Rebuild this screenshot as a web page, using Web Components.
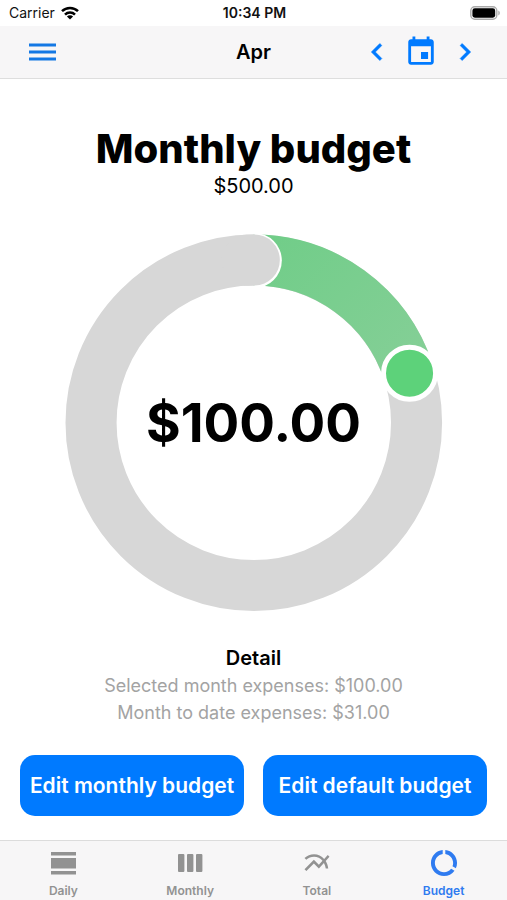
<!DOCTYPE html>
<html lang="en">
<head>
<meta charset="utf-8">
<meta name="viewport" content="width=device-width, initial-scale=1">
<title>Monthly budget</title>
<style>
  body { margin: 0; background: #fff; color: #000; font-family: Inter, "Liberation Sans", sans-serif; }
</style>
</head>
<body>
<budget-app></budget-app>

<template id="status-bar">
  <style>
    :host { display: grid; grid-template-columns: 1fr auto 1fr; align-items: center; height: 26px; padding: 0 7px 0 9px; font-size: 14px; line-height: 20px; color: #111; }
    .left { display: flex; align-items: center; gap: 6px; }
    .time { font-weight: 600; }
    .battery { justify-self: end; }
    svg { display: block; }
  </style>
  <span class="left"><slot name="carrier"></slot>
    <svg width="18" height="14" viewBox="0 0 18 14" fill="none" stroke="#000" stroke-width="2.5" aria-hidden="true">
      <path d="M1 5.2a11.4 11.4 0 0 1 16 0M4 8.6a7 7 0 0 1 10 0"/><path d="M9 13.6 5.9 10.6a4.4 4.4 0 0 1 6.2 0z" fill="#000" stroke="none"/>
    </svg>
  </span>
  <span class="time"><slot name="time"></slot></span>
  <svg class="battery" width="30" height="14" viewBox="0 0 30 14" aria-hidden="true">
    <rect x=".8" y=".8" width="26" height="12.4" rx="4" fill="#fff" stroke="#aaa" stroke-width="1.4"/>
    <rect x="2.4" y="2.3" width="22.8" height="9.4" rx="2.4"/><path d="M28.3 4.6c2 .8 2 4 0 4.8z" fill="#aaa"/>
  </svg>
</template>

<template id="nav-header">
  <style>
    :host { display: grid; grid-template-columns: 1fr auto 1fr; align-items: center; height: 52px; padding: 0 25px; background: #f7f6f7; border-bottom: 1px solid #dedede; }
    h2 { margin: 0; font-size: 20px; line-height: 26px; font-weight: 600; }
    button { display: block; border: 0; padding: 0; background: none; color: #007aff; cursor: pointer; }
    svg { display: block; fill: currentColor; }
    .actions { display: flex; justify-content: flex-end; gap: 10px; }
  </style>
  <button type="button" aria-label="Menu"><svg width="34" height="34" viewBox="0 0 34 34"><path d="M4 8.5h27v3H4zM4 15.5h27v3H4zM4 22.5h27v3H4z" fill="#1478e4"/></svg></button>
  <h2><slot></slot></h2>
  <div class="actions">
    <button type="button" aria-label="Previous month"><svg width="34" height="34" viewBox="0 0 24 24"><path d="M15.41 7.41 14 6l-6 6 6 6 1.41-1.41L10.83 12z" stroke="currentColor" stroke-width=".4"/></svg></button>
    <button type="button" aria-label="Choose month"><svg width="34" height="34" viewBox="0 0 24 24"><path d="M17 12h-5v5h5v-5zM16 1v2H8V1H6v2H5c-1.11 0-1.99.9-1.99 2L3 19c0 1.1.89 2 2 2h14c1.1 0 2-.9 2-2V5c0-1.1-.9-2-2-2h-1V1h-2zm3 18H5V8h14v11z"/></svg></button>
    <button type="button" aria-label="Next month"><svg width="34" height="34" viewBox="0 0 24 24"><path d="M10 6 8.59 7.41 13.17 12l-4.58 4.59L10 18l6-6z" stroke="currentColor" stroke-width=".4"/></svg></button>
  </div>
</template>

<template id="budget-ring">
  <style>
    :host { display: grid; place-items: center; width: 100%; margin: 0 auto; }
    svg, .value { grid-area: 1 / 1; }
    svg { display: block; width: 100%; height: auto; }
    .value { font-size: 53px; line-height: 64px; font-weight: 700; }
  </style>
  <svg viewBox="0 0 380 380" fill="none" aria-hidden="true">
    <defs><linearGradient id="g" gradientUnits="userSpaceOnUse" x1="200" y1="0" x2="340" y2="140"><stop offset="0" stop-color="#70cd88"/><stop offset="1" stop-color="#84cf96"/></linearGradient></defs>
    <circle cx="190.5" cy="189.5" r="162.5" stroke="#d7d7d7" stroke-width="51"/>
    <path d="M190.5 27A162.5 162.5 0 0 1 345 139.3" stroke="url(#g)" stroke-width="51"/>
    <path d="M191 0a27.5 27.5 0 0 1 0 55z" fill="#fff"/>
    <path d="M184 27.1L191 27" stroke="#d7d7d7" stroke-width="51" stroke-linecap="round"/>
    <circle cx="346" cy="140" r="26" fill="#5dd27a" stroke="#fff" stroke-width="5"/>
  </svg>
  <span class="value"><slot></slot></span>
</template>

<template id="action-button">
  <style>
    :host { display: block; flex: 1 1 0; min-width: 0; }
    button { display: block; width: 100%; height: 61px; border: 0; border-radius: 15px; padding: 0; background: #007aff; color: #fff; font: 600 21px/26px Inter, "Liberation Sans", sans-serif; white-space: nowrap; cursor: pointer; }
  </style>
  <button type="button"><slot></slot></button>
</template>

<template id="tab-item">
  <style>
    :host { display: block; flex: 1 1 0; color: #929292; }
    :host([active]) { color: #2f7bf0; }
    a { display: flex; flex-direction: column; align-items: center; gap: 4px; padding-top: 7px; color: inherit; text-decoration: none; font-size: 12px; line-height: 18px; font-weight: 600; }
    ::slotted(svg) { display: block; fill: currentColor; }
  </style>
  <a href="#"><slot name="icon"></slot><span><slot></slot></span></a>
</template>

<template id="tab-bar">
  <style>
    :host { display: block; background: #f7f6f7; border-top: 1px solid #dcdcdc; }
    nav { display: flex; height: 59px; }
  </style>
  <nav aria-label="Sections"><slot></slot></nav>
</template>

<template id="budget-app">
  <style>
    :host { display: flex; flex-direction: column; min-height: 100vh; }
    main { flex: 1; display: flex; flex-direction: column; text-align: center; padding: 46px 20px 24px; }
    h1 { margin: 0; font-size: 40px; line-height: 48px; font-weight: 800; }
    .limit { margin: 0 0 34px; font-size: 20px; line-height: 26px; }
    h2 { margin: 31px 0 0; font-size: 20px; line-height: 27px; font-weight: 600; }
    .detail { margin: 0; font-size: 18px; line-height: 27px; color: #a3a3a3; }
    .buttons { display: flex; gap: 19px; margin-top: auto; }
    budget-ring { width: 81.5%; }
  </style>
  <status-bar><span slot="carrier">Carrier</span><span slot="time">10:34 PM</span></status-bar>
  <nav-header>Apr</nav-header>
  <main>
    <h1>Monthly budget</h1>
    <p class="limit">$500.00</p>
    <budget-ring>$100.00</budget-ring>
    <h2>Detail</h2>
    <p class="detail">Selected month expenses: $100.00</p>
    <p class="detail">Month to date expenses: $31.00</p>
    <div class="buttons">
      <action-button>Edit monthly budget</action-button>
      <action-button>Edit default budget</action-button>
    </div>
  </main>
  <tab-bar>
    <tab-item><svg slot="icon" width="30" height="30" viewBox="0 0 30 30"><path d="M3 4h25v3.5H3zM3 10h25v10.5H3zM3 23h25v3.5H3z"/></svg>Daily</tab-item>
    <tab-item><svg slot="icon" width="30" height="30" viewBox="0 0 30 30"><rect x="3" y="6" width="6.4" height="18" rx="1"/><rect x="12" y="6" width="6.4" height="18" rx="1"/><rect x="21" y="6" width="6.4" height="18" rx="1"/></svg>Monthly</tab-item>
    <tab-item><svg slot="icon" width="30" height="30" viewBox="0 0 24 24"><path d="M22 6.92l-1.41-1.41-2.85 3.21C15.68 6.4 12.83 5 9.61 5 6.72 5 4.07 6.16 2 8l1.42 1.42C5.12 7.93 7.27 7 9.61 7c2.74 0 5.09 1.26 6.77 3.24l-2.88 3.24-4-4L2 16.99l1.5 1.5 6-6.01 4 4 4.05-4.55c.75 1.35 1.25 2.9 1.44 4.55H21c-.22-2.3-.95-4.39-2.04-6.14L22 6.92z"/></svg>Total</tab-item>
    <tab-item active><svg slot="icon" width="30" height="30" viewBox="0.5 0.5 23 23"><path d="M13 2.05v3.03c3.39.49 6 3.39 6 6.92 0 .9-.18 1.75-.48 2.54l2.6 1.53c.56-1.24.88-2.62.88-4.07 0-5.18-3.95-9.45-9-9.95zM12 19c-3.87 0-7-3.13-7-7 0-3.53 2.61-6.43 6-6.92V2.05c-5.06.5-9 4.76-9 9.95 0 5.52 4.47 10 9.99 10 3.31 0 6.24-1.61 8.06-4.09l-2.6-1.53C16.17 17.98 14.21 19 12 19z"/></svg>Budget</tab-item>
  </tab-bar>
</template>

<script>
  class TemplateElement extends HTMLElement {
    constructor() {
      super();
      const template = document.getElementById(this.localName);
      this.attachShadow({ mode: "open" }).append(document.importNode(template.content, true));
    }
  }
  class StatusBar extends TemplateElement {}
  class NavHeader extends TemplateElement {}
  class BudgetRing extends TemplateElement {}
  class ActionButton extends TemplateElement {}
  class TabItem extends TemplateElement {
    connectedCallback() {
      if (this.hasAttribute("active")) this.shadowRoot.querySelector("a").setAttribute("aria-current", "page");
    }
  }
  class TabBar extends TemplateElement {}
  class BudgetApp extends TemplateElement {}
  customElements.define("status-bar", StatusBar);
  customElements.define("nav-header", NavHeader);
  customElements.define("budget-ring", BudgetRing);
  customElements.define("action-button", ActionButton);
  customElements.define("tab-item", TabItem);
  customElements.define("tab-bar", TabBar);
  customElements.define("budget-app", BudgetApp);
</script>
</body>
</html>
